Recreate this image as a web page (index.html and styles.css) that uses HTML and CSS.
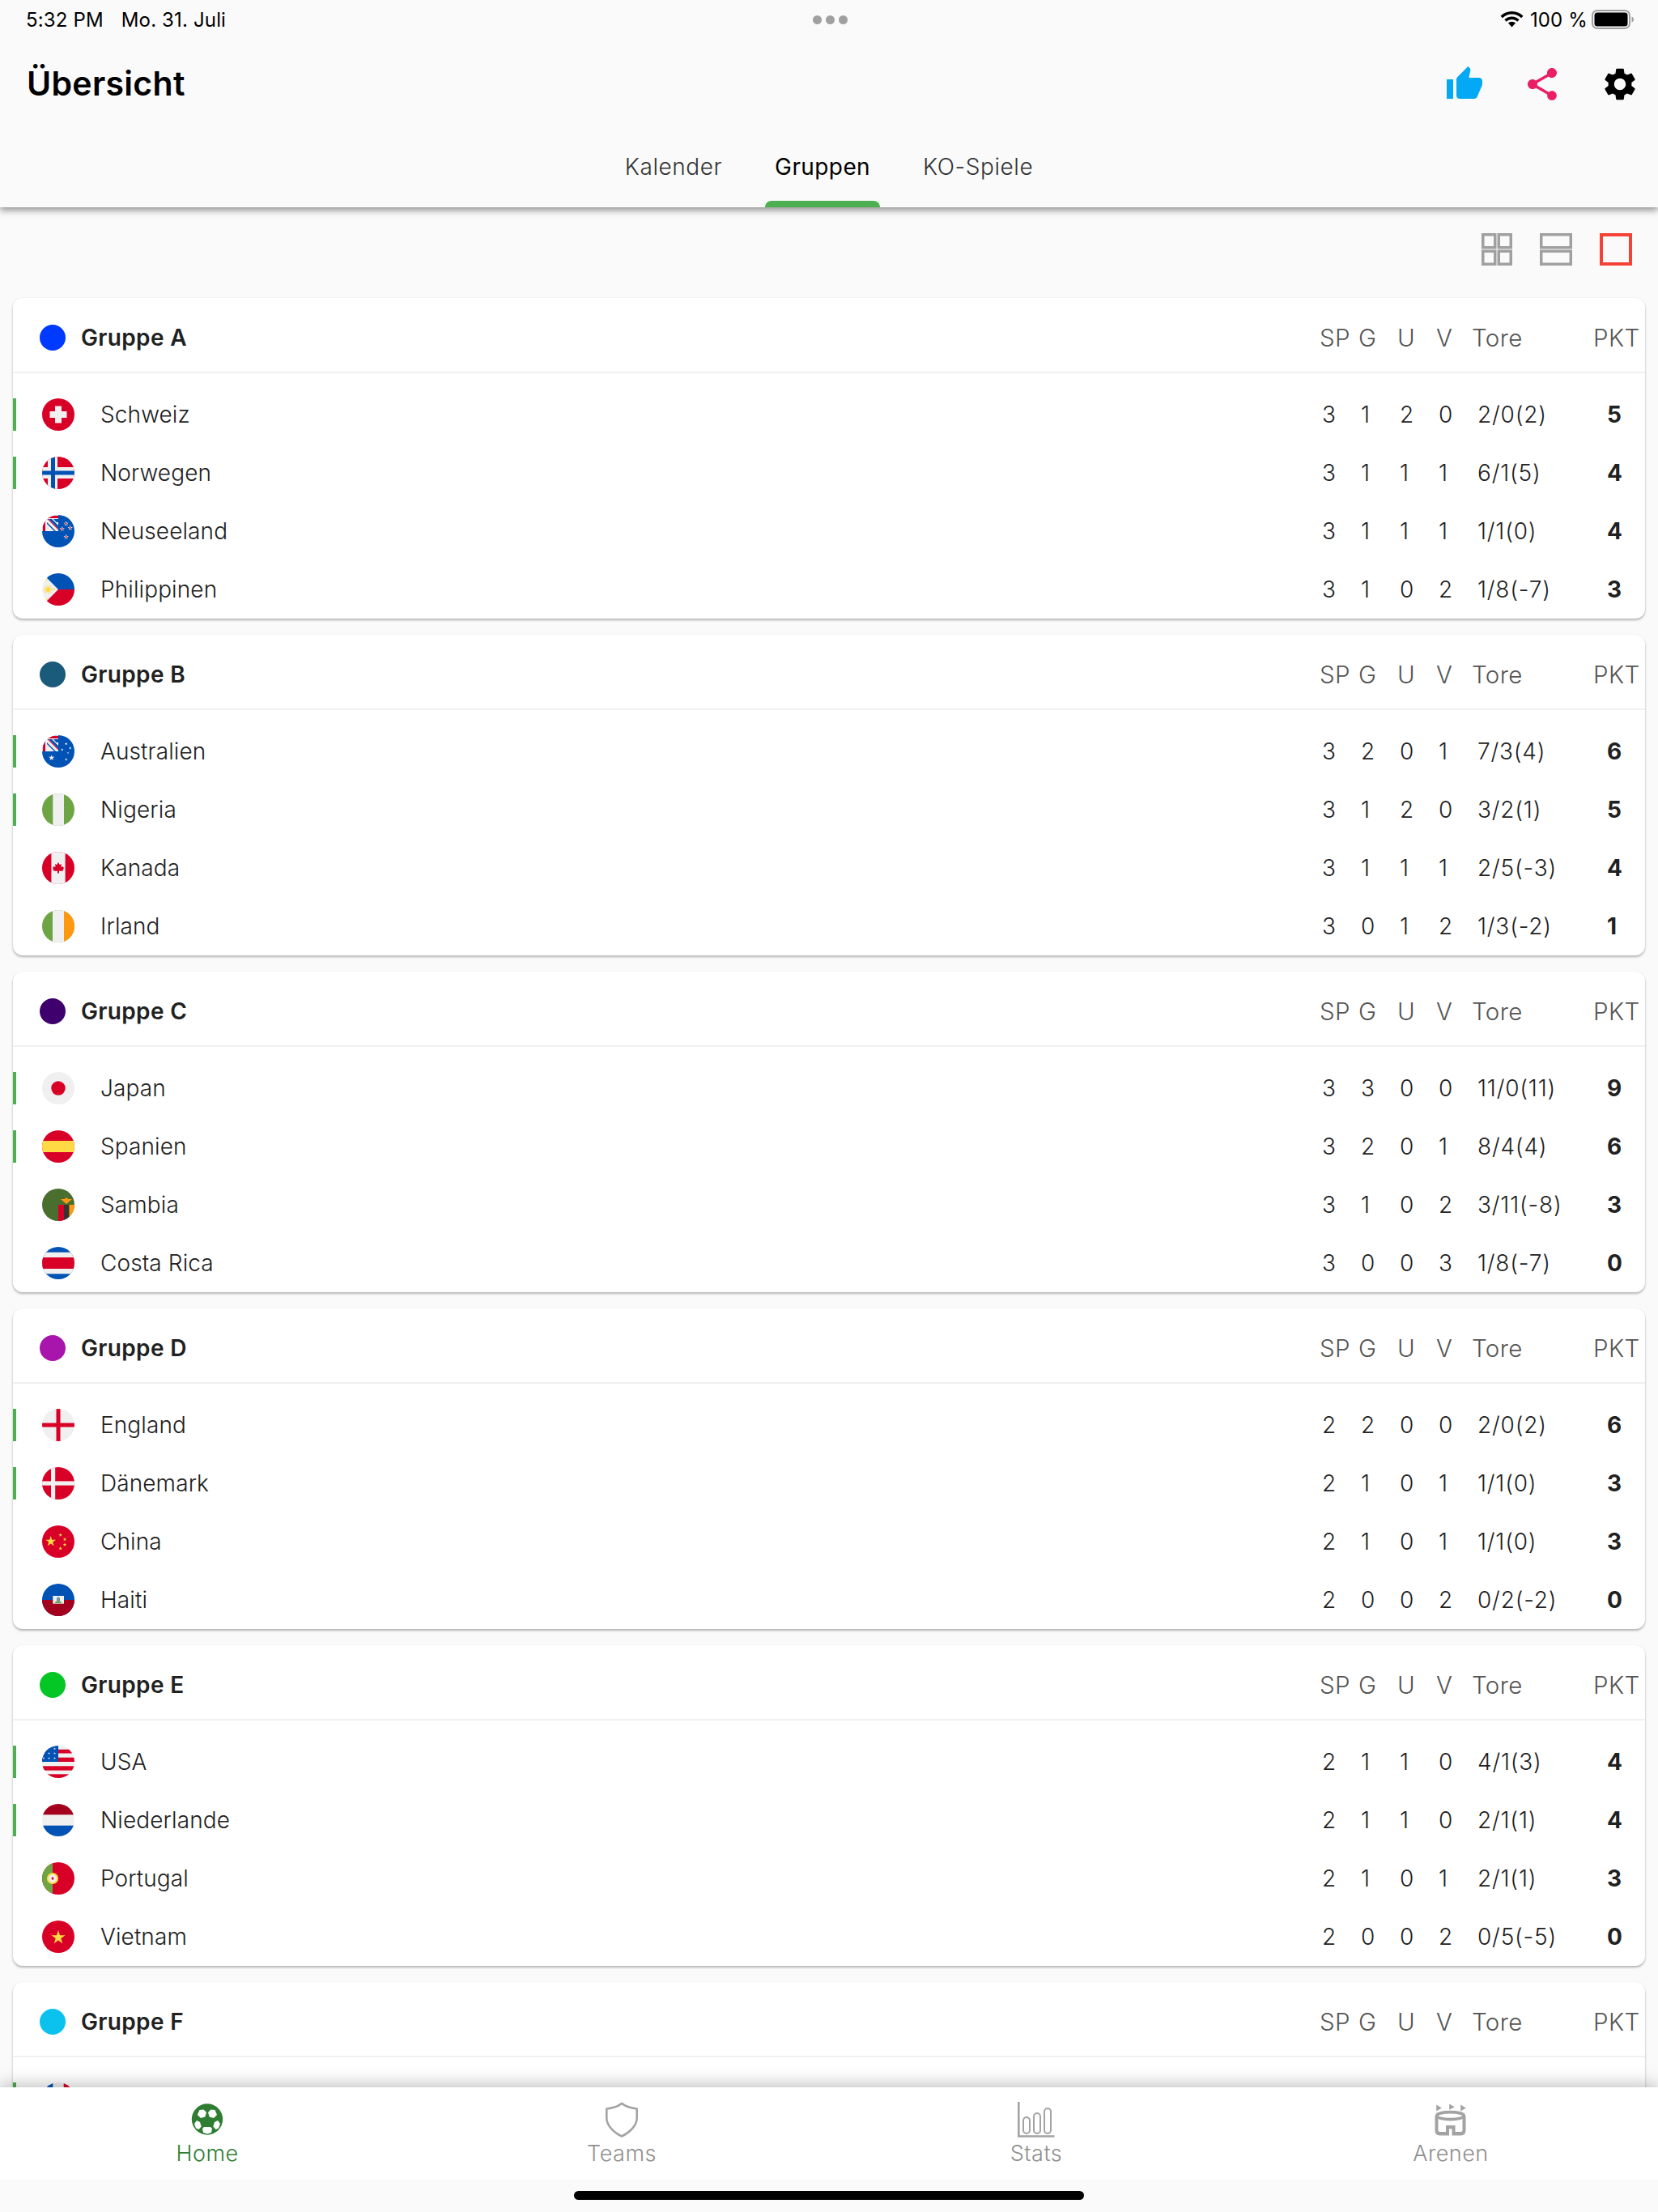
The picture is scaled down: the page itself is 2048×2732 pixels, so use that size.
FILE: index.html
```html
<!DOCTYPE html>
<html lang="de">
<head>
<meta charset="utf-8">
<title>Übersicht</title>
<link rel="stylesheet" href="styles.css">
</head>
<body>
<svg class="defs" width="0" height="0" aria-hidden="true">
  <defs>
    <polygon id="s" points="0,-1 .225,-.309 .951,-.309 .363,.118 .588,.809 0,.382 -.588,.809 -.363,.118 -.951,-.309 -.225,-.309"/>
    <g id="union">
      <rect width="20" height="20" fill="#f0f0f0"/>
      <path d="M1 7V2.500Q2 1 6 1H20V4H6.500Q4 4 4 7V20H1Z" fill="#d80027"/>
      <path d="M6 5H12L20 13V20H15L6 11Z" fill="#0052b4"/>
      <path d="M5 5H8L20 17V20H17L5 8Z" fill="#f0f0f0"/>
      <path d="M6.500 5H8L20 17V18.500Z" fill="#d80027"/>
      <path d="M14 5H20V9H17.500Z" fill="#0052b4"/>
    </g>
    <symbol id="ch" viewBox="0 0 40 40"><rect width="40" height="40" fill="#d80027"/><path d="M16 9.500H24V16H30.500V24H24V30.500H16V24H9.500V16H16Z" fill="#f0f0f0"/></symbol>
    <symbol id="no" viewBox="0 0 40 40"><rect width="40" height="40" fill="#d80027"/><path d="M7 0H19V13H40V27H19V40H7V27H0V13H7Z" fill="#f0f0f0"/><path d="M11 0H16V17.500H40V22.500H16V40H11V22.500H0V17.500H11Z" fill="#0052b4"/></symbol>
    <symbol id="nz" viewBox="0 0 40 40"><rect width="40" height="40" fill="#0052b4"/><use href="#union"/><g fill="#f0f0f0"><use href="#s" transform="translate(29.700 10.700) scale(3.400)"/><use href="#s" transform="translate(24.700 17.300) scale(3.400)"/><use href="#s" transform="translate(34.700 16) scale(3.400)"/><use href="#s" transform="translate(29.700 27) scale(3.400)"/></g><g fill="#d80027"><use href="#s" transform="translate(29.700 10.700) scale(1.800)"/><use href="#s" transform="translate(24.700 17.300) scale(1.800)"/><use href="#s" transform="translate(34.700 16) scale(1.800)"/><use href="#s" transform="translate(29.700 27) scale(1.800)"/></g></symbol>
    <symbol id="ph" viewBox="0 0 40 40"><rect width="40" height="40" fill="#f0f0f0"/><path d="M5.860 5.860 20 20H40V0H5.860Z" fill="#0052b4"/><path d="M5.860 34.140 20 20H40V40H5.860Z" fill="#d80027"/><circle cx="7.300" cy="20" r="3.100" fill="#ffda44"/><circle cx="7.300" cy="20" r="4.400" fill="none" stroke="#ffda44" stroke-width="1.600" stroke-dasharray="1.300 1.500"/><circle cx="6" cy="8" r=".9" fill="#ffda44"/><circle cx="6" cy="32" r=".9" fill="#ffda44"/><circle cx="15" cy="20" r=".9" fill="#ffda44"/></symbol>
    <symbol id="au" viewBox="0 0 40 40"><rect width="40" height="40" fill="#0052b4"/><use href="#union"/><g fill="#f0f0f0"><use href="#s" transform="translate(11.700 28) scale(3.800)"/><use href="#s" transform="translate(29.700 10.700) scale(1.900)"/><use href="#s" transform="translate(24.700 18) scale(1.900)"/><use href="#s" transform="translate(34.700 16) scale(1.900)"/><use href="#s" transform="translate(32 22) scale(1.300)"/><use href="#s" transform="translate(29.700 30) scale(1.900)"/></g></symbol>
    <symbol id="ng" viewBox="0 0 40 40"><rect width="40" height="40" fill="#6da544"/><rect x="13.300" width="13.700" height="40" fill="#f0f0f0"/></symbol>
    <symbol id="ca" viewBox="0 0 40 40"><rect width="40" height="40" fill="#d80027"/><rect x="11.400" width="17.200" height="40" fill="#f0f0f0"/><path d="M20 13 21.800 16 24 15.200 23.400 19 25.500 18 27 20.200 25.800 22 26.500 23 23 24 21 23.500V26.500H19V23.500L17 24 13.500 23 14.200 22 13 20.200 14.500 18 16.600 19 16 15.200 18.200 16Z" fill="#d80027"/></symbol>
    <symbol id="ie" viewBox="0 0 40 40"><rect width="40" height="40" fill="#6da544"/><rect x="13" width="14" height="40" fill="#f0f0f0"/><rect x="27" width="13" height="40" fill="#ff9811"/></symbol>
    <symbol id="jp" viewBox="0 0 40 40"><rect width="40" height="40" fill="#f0f0f0"/><circle cx="20" cy="20" r="8.700" fill="#d80027"/></symbol>
    <symbol id="es" viewBox="0 0 40 40"><rect width="40" height="40" fill="#d80027"/><rect y="13" width="40" height="14" fill="#ffda44"/></symbol>
    <symbol id="zm" viewBox="0 0 40 40"><rect width="40" height="40" fill="#496e2d"/><rect x="20" y="20" width="7" height="20" fill="#d80027"/><rect x="27" y="20" width="6.500" height="20" fill="#333"/><rect x="33.500" y="20" width="6.500" height="20" fill="#ff9811"/><path d="M23 13H27.500L30 11 32.500 13H37L33.500 16 30 19 26.500 16Z" fill="#ff9811"/></symbol>
    <symbol id="cr" viewBox="0 0 40 40"><rect width="40" height="40" fill="#0052b4"/><rect y="6.700" width="40" height="26.600" fill="#f0f0f0"/><rect y="13" width="40" height="14" fill="#d80027"/></symbol>
    <symbol id="en" viewBox="0 0 40 40"><rect width="40" height="40" fill="#f0f0f0"/><rect x="17.500" width="5" height="40" fill="#d80027"/><rect y="17.500" width="40" height="5" fill="#d80027"/></symbol>
    <symbol id="dk" viewBox="0 0 40 40"><rect width="40" height="40" fill="#d80027"/><rect x="11" width="5.200" height="40" fill="#f0f0f0"/><rect y="17.400" width="40" height="5.200" fill="#f0f0f0"/></symbol>
    <symbol id="cn" viewBox="0 0 40 40"><rect width="40" height="40" fill="#d80027"/><g fill="#ffda44"><use href="#s" transform="translate(10.700 19.800) scale(6.800)"/><use href="#s" transform="translate(22.700 11.700) scale(2.500)"/><use href="#s" transform="translate(28 17.300) scale(2.500)"/><use href="#s" transform="translate(28 23.700) scale(2.500)"/><use href="#s" transform="translate(22.700 28.500) scale(2.500)"/></g></symbol>
    <symbol id="ht" viewBox="0 0 40 40"><rect width="40" height="40" fill="#0052b4"/><rect y="20" width="40" height="20" fill="#a2001d"/><rect x="13.300" y="15" width="13.700" height="9.700" fill="#f0f0f0"/><rect x="18.300" y="16.500" width="3.400" height="5.500" rx="1.500" fill="#0052b4"/><path d="M15.500 24 17 21.800H23L24.500 24Z" fill="#6da544"/><rect x="19.400" y="17" width="1.200" height="4.500" fill="#ffda44"/></symbol>
    <symbol id="us" viewBox="0 0 40 40"><rect width="40" height="40" fill="#f0f0f0"/><g fill="#d80027"><rect y="4.500" width="40" height="5"/><rect y="14.700" width="40" height="5.300"/><rect y="25.300" width="40" height="5.300"/><rect y="35.300" width="40" height="4.700"/></g><rect x="0" width="20" height="20" fill="#0052b4"/><rect x="20" width="20" height="4.500" fill="#f0f0f0"/><g fill="#f0f0f0"><use href="#s" transform="translate(15.500 4) scale(1.600)"/><use href="#s" transform="translate(8.500 9.500) scale(1.600)"/><use href="#s" transform="translate(15.500 9.500) scale(1.600)"/><use href="#s" transform="translate(2 15.500) scale(1.600)"/><use href="#s" transform="translate(8.500 15.500) scale(1.600)"/><use href="#s" transform="translate(15.500 15.500) scale(1.600)"/></g></symbol>
    <symbol id="nl" viewBox="0 0 40 40"><rect width="40" height="40" fill="#f0f0f0"/><rect width="40" height="13.300" fill="#a2001d"/><rect y="26.700" width="40" height="13.300" fill="#0052b4"/></symbol>
    <symbol id="pt" viewBox="0 0 40 40"><rect width="40" height="40" fill="#d80027"/><rect width="13" height="40" fill="#6da544"/><circle cx="13" cy="20" r="6" fill="#f0f0f0" stroke="#ffda44" stroke-width="2.200"/><rect x="10" y="16.500" width="6" height="7" rx="1.500" fill="#f0f0f0"/><rect x="11.800" y="18.500" width="2.400" height="3" fill="#d80027"/></symbol>
    <symbol id="vn" viewBox="0 0 40 40"><rect width="40" height="40" fill="#d80027"/><use href="#s" fill="#ffda44" transform="translate(20 21) scale(9)"/></symbol>
    <symbol id="fr" viewBox="0 0 40 40"><rect width="40" height="40" fill="#f0f0f0"/><rect width="13.300" height="40" fill="#0052b4"/><rect x="26.700" width="13.300" height="40" fill="#d80027"/></symbol>
  </defs>
</svg>

<header class="app-header">
  <div class="status">
    <div class="status-left"><span>5:32 PM</span><span>Mo. 31. Juli</span></div>
    <div class="dots"><i></i><i></i><i></i></div>
    <div class="status-right">
      <svg class="wifi" viewBox="0 0 29 20"><path d="M14.500 0C9 0 4.200 2.200.5 5.700L3 8.300C6 5.400 10 3.600 14.500 3.600S23 5.400 26 8.300L28.500 5.700C24.800 2.200 20 0 14.500 0Z"/><path d="M14.500 6.500C11 6.500 7.700 7.900 5.300 10.200L7.800 12.800C9.600 11.100 11.900 10.100 14.500 10.100S19.400 11.100 21.200 12.800L23.700 10.200C21.300 7.900 18 6.500 14.500 6.500Z"/><path d="M14.500 12.800C12.800 12.800 11.200 13.500 10 14.600L14.500 19.500 19 14.600C17.800 13.500 16.200 12.800 14.500 12.800Z"/></svg>
      <span class="pct">100 %</span>
      <svg class="battery" viewBox="0 0 52 24"><rect x="1" y="1" width="46" height="22" rx="6" fill="none" stroke="#a0a0a0" stroke-width="2"/><rect x="3.500" y="3.500" width="41" height="17" rx="3.500"/><path d="M49.500 8.500C51 9 52 10.300 52 12S51 15 49.500 15.500Z" fill="#a0a0a0"/></svg>
    </div>
  </div>
  <div class="title-row">
    <h1 class="title">Übersicht</h1>
    <div class="actions">
      <svg class="action thumb" viewBox="0 0 24 24"><path d="M1 21h4V9H1v12zm22-11c0-1.100-.9-2-2-2h-6.310l.95-4.570.03-.32c0-.41-.17-.79-.44-1.060L14.170 1 7.590 7.590C7.220 7.950 7 8.450 7 9v10c0 1.100.9 2 2 2h9c.83 0 1.540-.5 1.840-1.220l3.020-7.050c.09-.23.14-.47.14-.73v-2z"/></svg>
      <svg class="action share" viewBox="0 0 24 24"><path d="M18 16.080c-.76 0-1.440.3-1.960.77L8.910 12.700c.05-.23.09-.46.09-.7s-.04-.47-.09-.7l7.050-4.110c.54.5 1.250.81 2.040.81 1.660 0 3-1.340 3-3s-1.340-3-3-3-3 1.340-3 3c0 .24.04.47.09.7L8.040 9.810C7.500 9.310 6.790 9 6 9c-1.660 0-3 1.340-3 3s1.340 3 3 3c.79 0 1.500-.31 2.040-.81l7.120 4.160c-.05.21-.08.43-.08.65 0 1.610 1.310 2.920 2.920 2.920 1.610 0 2.920-1.310 2.920-2.920s-1.310-2.920-2.920-2.920z"/></svg>
      <svg class="action gear" viewBox="0 0 24 24"><path d="M19.140 12.940c.04-.3.06-.61.06-.94 0-.32-.02-.64-.07-.94l2.030-1.580c.18-.14.23-.41.12-.61l-1.920-3.320c-.12-.22-.37-.29-.59-.22l-2.390.96c-.5-.38-1.030-.7-1.620-.94L14.400 2.810c-.04-.24-.24-.41-.48-.41h-3.840c-.24 0-.43.17-.47.41L9.250 5.350C8.660 5.590 8.120 5.920 7.630 6.290L5.240 5.330c-.22-.08-.47 0-.59.22L2.740 8.870C2.620 9.080 2.660 9.340 2.860 9.480l2.030 1.580C4.840 11.360 4.800 11.690 4.800 12s.02.64.07.94l-2.030 1.580c-.18.14-.23.41-.12.61l1.920 3.320c.12.22.37.29.59.22l2.390-.96c.5.38 1.030.7 1.620.94l.36 2.540c.05.24.24.41.48.41h3.840c.24 0 .44-.17.47-.41l.36-2.540c.59-.24 1.130-.56 1.620-.94l2.390.96c.22.08.47 0 .59-.22l1.920-3.320c.12-.22.07-.47-.12-.61L19.140 12.940zM12 15.600c-1.980 0-3.600-1.620-3.600-3.600s1.620-3.600 3.600-3.600 3.600 1.620 3.600 3.600-1.620 3.600-3.600 3.600z"/></svg>
    </div>
  </div>
  <nav class="tabs">
    <div class="tab">Kalender</div>
    <div class="tab active">Gruppen</div>
    <div class="tab">KO-Spiele</div>
  </nav>
</header>

<main class="content">
  <div class="views">
    <svg class="view-grid" viewBox="0 0 38 40"><g fill="none" stroke="#a0a0a0" stroke-width="3.500"><rect x="1.750" y="1.750" width="15" height="16"/><rect x="21.250" y="1.750" width="15" height="16"/><rect x="1.750" y="22.250" width="15" height="16"/><rect x="21.250" y="22.250" width="15" height="16"/></g></svg>
    <svg class="view-one" viewBox="0 0 40 40"><g fill="none" stroke="#a0a0a0" stroke-width="3.500"><rect x="1.750" y="1.750" width="36.500" height="16"/><rect x="1.750" y="22.250" width="36.500" height="16"/></g></svg>
    <svg class="view-one" viewBox="0 0 40 40"><rect x="2" y="2" width="36" height="36" fill="none" stroke="#f44336" stroke-width="4"/></svg>
  </div>

  <section class="card">
    <div class="card-head"><span class="dot dot-a"></span><span class="group">Gruppe A</span>
      <div class="stats head"><span>SP</span><span>G</span><span>U</span><span>V</span><span>Tore</span><span>PKT</span></div></div>
    <div class="rows">
      <div class="row"><i class="bar on"></i><svg class="flag"><use href="#ch"/></svg><span class="name">Schweiz</span><div class="stats"><span>3</span><span>1</span><span>2</span><span>0</span><span>2/0(2)</span><b>5</b></div></div>
      <div class="row"><i class="bar on"></i><svg class="flag"><use href="#no"/></svg><span class="name">Norwegen</span><div class="stats"><span>3</span><span>1</span><span>1</span><span>1</span><span>6/1(5)</span><b>4</b></div></div>
      <div class="row"><i class="bar"></i><svg class="flag"><use href="#nz"/></svg><span class="name">Neuseeland</span><div class="stats"><span>3</span><span>1</span><span>1</span><span>1</span><span>1/1(0)</span><b>4</b></div></div>
      <div class="row"><i class="bar"></i><svg class="flag"><use href="#ph"/></svg><span class="name">Philippinen</span><div class="stats"><span>3</span><span>1</span><span>0</span><span>2</span><span>1/8(-7)</span><b>3</b></div></div>
    </div>
  </section>

  <section class="card">
    <div class="card-head"><span class="dot dot-b"></span><span class="group">Gruppe B</span>
      <div class="stats head"><span>SP</span><span>G</span><span>U</span><span>V</span><span>Tore</span><span>PKT</span></div></div>
    <div class="rows">
      <div class="row"><i class="bar on"></i><svg class="flag"><use href="#au"/></svg><span class="name">Australien</span><div class="stats"><span>3</span><span>2</span><span>0</span><span>1</span><span>7/3(4)</span><b>6</b></div></div>
      <div class="row"><i class="bar on"></i><svg class="flag"><use href="#ng"/></svg><span class="name">Nigeria</span><div class="stats"><span>3</span><span>1</span><span>2</span><span>0</span><span>3/2(1)</span><b>5</b></div></div>
      <div class="row"><i class="bar"></i><svg class="flag"><use href="#ca"/></svg><span class="name">Kanada</span><div class="stats"><span>3</span><span>1</span><span>1</span><span>1</span><span>2/5(-3)</span><b>4</b></div></div>
      <div class="row"><i class="bar"></i><svg class="flag"><use href="#ie"/></svg><span class="name">Irland</span><div class="stats"><span>3</span><span>0</span><span>1</span><span>2</span><span>1/3(-2)</span><b>1</b></div></div>
    </div>
  </section>

  <section class="card">
    <div class="card-head"><span class="dot dot-c"></span><span class="group">Gruppe C</span>
      <div class="stats head"><span>SP</span><span>G</span><span>U</span><span>V</span><span>Tore</span><span>PKT</span></div></div>
    <div class="rows">
      <div class="row"><i class="bar on"></i><svg class="flag"><use href="#jp"/></svg><span class="name">Japan</span><div class="stats"><span>3</span><span>3</span><span>0</span><span>0</span><span>11/0(11)</span><b>9</b></div></div>
      <div class="row"><i class="bar on"></i><svg class="flag"><use href="#es"/></svg><span class="name">Spanien</span><div class="stats"><span>3</span><span>2</span><span>0</span><span>1</span><span>8/4(4)</span><b>6</b></div></div>
      <div class="row"><i class="bar"></i><svg class="flag"><use href="#zm"/></svg><span class="name">Sambia</span><div class="stats"><span>3</span><span>1</span><span>0</span><span>2</span><span>3/11(-8)</span><b>3</b></div></div>
      <div class="row"><i class="bar"></i><svg class="flag"><use href="#cr"/></svg><span class="name">Costa Rica</span><div class="stats"><span>3</span><span>0</span><span>0</span><span>3</span><span>1/8(-7)</span><b>0</b></div></div>
    </div>
  </section>

  <section class="card">
    <div class="card-head"><span class="dot dot-d"></span><span class="group">Gruppe D</span>
      <div class="stats head"><span>SP</span><span>G</span><span>U</span><span>V</span><span>Tore</span><span>PKT</span></div></div>
    <div class="rows">
      <div class="row"><i class="bar on"></i><svg class="flag"><use href="#en"/></svg><span class="name">England</span><div class="stats"><span>2</span><span>2</span><span>0</span><span>0</span><span>2/0(2)</span><b>6</b></div></div>
      <div class="row"><i class="bar on"></i><svg class="flag"><use href="#dk"/></svg><span class="name">Dänemark</span><div class="stats"><span>2</span><span>1</span><span>0</span><span>1</span><span>1/1(0)</span><b>3</b></div></div>
      <div class="row"><i class="bar"></i><svg class="flag"><use href="#cn"/></svg><span class="name">China</span><div class="stats"><span>2</span><span>1</span><span>0</span><span>1</span><span>1/1(0)</span><b>3</b></div></div>
      <div class="row"><i class="bar"></i><svg class="flag"><use href="#ht"/></svg><span class="name">Haiti</span><div class="stats"><span>2</span><span>0</span><span>0</span><span>2</span><span>0/2(-2)</span><b>0</b></div></div>
    </div>
  </section>

  <section class="card">
    <div class="card-head"><span class="dot dot-e"></span><span class="group">Gruppe E</span>
      <div class="stats head"><span>SP</span><span>G</span><span>U</span><span>V</span><span>Tore</span><span>PKT</span></div></div>
    <div class="rows">
      <div class="row"><i class="bar on"></i><svg class="flag"><use href="#us"/></svg><span class="name">USA</span><div class="stats"><span>2</span><span>1</span><span>1</span><span>0</span><span>4/1(3)</span><b>4</b></div></div>
      <div class="row"><i class="bar on"></i><svg class="flag"><use href="#nl"/></svg><span class="name">Niederlande</span><div class="stats"><span>2</span><span>1</span><span>1</span><span>0</span><span>2/1(1)</span><b>4</b></div></div>
      <div class="row"><i class="bar"></i><svg class="flag"><use href="#pt"/></svg><span class="name">Portugal</span><div class="stats"><span>2</span><span>1</span><span>0</span><span>1</span><span>2/1(1)</span><b>3</b></div></div>
      <div class="row"><i class="bar"></i><svg class="flag"><use href="#vn"/></svg><span class="name">Vietnam</span><div class="stats"><span>2</span><span>0</span><span>0</span><span>2</span><span>0/5(-5)</span><b>0</b></div></div>
    </div>
  </section>

  <section class="card">
    <div class="card-head"><span class="dot dot-f"></span><span class="group">Gruppe F</span>
      <div class="stats head"><span>SP</span><span>G</span><span>U</span><span>V</span><span>Tore</span><span>PKT</span></div></div>
    <div class="rows">
      <div class="row"><i class="bar on"></i><svg class="flag"><use href="#fr"/></svg></div>
    </div>
  </section>
</main>

<nav class="bottom-nav">
  <div class="nav-item current">
    <svg class="nav-icon" viewBox="0 0 46 44"><g transform="translate(4 2)"><circle cx="19" cy="19.500" r="19.200" fill="#2e7d32"/><g fill="#fff"><path d="M9.500 8 14.500 7.500 18 11 16.300 16.500 11 18 6.800 14Z"/><path d="M23.500 7.500 28.500 8 31 14 27 18 21.700 16.500 20 11Z"/><path d="M6 21 10 23 11.700 28.500 8.500 32 5 30.500 3 25Z"/><path d="M32 21 35 25 33 30.500 29.500 32 26.300 28.500 28 23Z"/><path d="M15 29H23L25 31 24 36 19 37.500 14 36 13 31Z"/></g></g></svg>
    <span>Home</span>
  </div>
  <div class="nav-item">
    <svg class="nav-icon" viewBox="0 0 46 44"><path d="M23 1.800C27 5.500 35 7.800 41.700 8.500V20C41.700 29 33 38 23 42.500 13 38 4.300 29 4.300 20V8.500C11 7.800 19 5.500 23 1.800Z" fill="none" stroke="#a3a3a3" stroke-width="2.600" stroke-linejoin="round"/></svg>
    <span>Teams</span>
  </div>
  <div class="nav-item">
    <svg class="nav-icon" viewBox="0 0 46 44"><g fill="none" stroke="#a3a3a3"><path d="M1.300 0V42.500H45.500" stroke-width="2.600"/><rect x="7" y="19" width="8" height="20" rx="4" stroke-width="2"/><rect x="20" y="14" width="8" height="25" rx="4" stroke-width="2"/><rect x="33" y="8" width="8" height="31" rx="4" stroke-width="2"/></g></svg>
    <span>Stats</span>
  </div>
  <div class="nav-item">
    <svg class="nav-icon" viewBox="0 0 46 44"><g transform="translate(3.500 2.500) scale(1 1.080)"><g fill="#a3a3a3"><path d="M1.700 1 8.300 4.600 1.700 8.300Z"/><path d="M17.700 0 24.300 3.400 17.700 6.700Z"/><path d="M31.700 1 38.300 4.600 31.700 8.300Z"/></g><g fill="none" stroke="#a3a3a3"><ellipse cx="19" cy="13.500" rx="17" ry="4.200" stroke-width="3.400"/><path d="M2 14V30Q2 34 6 34H15.500V26.500H23V34H32Q36 34 36 30V14" stroke-width="4"/></g></g></svg>
    <span>Arenen</span>
  </div>
</nav>
<div class="home-area"><div class="home-bar"></div></div>
</body>
</html>
```

FILE: styles.css
```css
* { box-sizing: border-box; }
html, body { margin: 0; padding: 0; }
body {
  width: 2048px;
  height: 2732px;
  overflow: hidden;
  display: flex;
  flex-direction: column;
  background: #fafafa;
  color: #212121;
  font-family: Inter, "Noto Sans", sans-serif;
}
.defs { position: absolute; }

.app-header {
  position: relative;
  z-index: 2;
  height: 256px;
  flex: none;
  background: #fafafa;
  box-shadow: 0 4px 8px rgba(0, 0, 0, .4);
}
.status {
  height: 48px;
  padding: 0 30px 0 32px;
  display: grid;
  grid-template-columns: 1fr auto 1fr;
  align-items: center;
  font-size: 24px;
  letter-spacing: .15px;
  color: #000;
}
.status-left { display: flex; gap: 22px; }
.dots { display: flex; gap: 5px; }
.dots i { width: 11px; height: 11px; border-radius: 50%; background: #a0a0a0; }
.status-right { display: flex; align-items: center; justify-content: flex-end; }
.wifi { width: 29px; height: 20px; fill: #000; margin-right: 8px; }
.pct { margin-right: 5px; }
.battery { width: 52px; height: 24px; fill: #000; }

.title-row {
  height: 110px;
  padding: 0 23px 0 33px;
  display: flex;
  align-items: center;
  justify-content: space-between;
}
.title { margin: 0; font-size: 41px; font-weight: 600; letter-spacing: .3px; color: #000; }
.actions { display: flex; gap: 48px; margin-top: 2px; }
.action { width: 48px; height: 48px; }
.thumb { fill: #03a9f4; }
.share { fill: #e91e63; }
.gear { fill: #000; }

.tabs { height: 98px; display: flex; justify-content: center; gap: 41px; }
.tab {
  padding: 5px 12px 0;
  display: flex;
  align-items: center;
  font-size: 28px;
  font-weight: 300;
  letter-spacing: .55px;
  color: #333;
  border-bottom: 8px solid transparent;
}
.tab.active { color: #000; font-weight: 400; letter-spacing: .4px; position: relative; }
.tab.active::after {
  content: "";
  position: absolute;
  left: 0;
  right: 0;
  bottom: -8px;
  height: 8px;
  background: #4caf50;
  border-radius: 8px 8px 0 0;
}

.content { flex: 1; min-height: 0; overflow: hidden; }
.views {
  height: 112px;
  padding: 32px 32px 0 0;
  display: flex;
  justify-content: flex-end;
  align-items: flex-start;
  gap: 34px;
}
.view-grid { width: 38px; height: 40px; }
.view-one { width: 40px; height: 40px; }

.card {
  margin: 0 16px 20px;
  background: #fff;
  border-radius: 12px;
  box-shadow: 0 2px 3px rgba(0, 0, 0, .28), 0 0 2px rgba(0, 0, 0, .06);
}
.card-head {
  height: 93px;
  padding-top: 7px;
  display: flex;
  align-items: center;
  border-bottom: 2px solid #f0f0f0;
}
.dot { width: 32px; height: 32px; border-radius: 50%; margin-left: 33px; flex: none; }
.dot-a { background: #0039ff; }
.dot-b { background: #1a5a7a; }
.dot-c { background: #3f006e; }
.dot-d { background: #a815ac; }
.dot-e { background: #04c625; }
.dot-f { background: #0bc2ee; }
.group { margin-left: 19px; font-size: 28px; font-weight: 600; letter-spacing: .35px; }

.rows { padding-top: 15px; }
.row { height: 72px; display: flex; align-items: center; }
.bar { width: 4px; height: 40px; flex: none; }
.bar.on { background: #4caf50; }
.flag { width: 40px; height: 40px; border-radius: 50%; margin-left: 32px; flex: none; }
.name { margin-left: 32px; font-size: 28px; font-weight: 300; letter-spacing: .1px; }

.stats {
  margin-left: auto;
  display: grid;
  grid-template-columns: 48px 48px 48px 44px 150px 63px;
  font-size: 28px;
  font-weight: 300;
  letter-spacing: .8px;
}
.stats span { padding-left: 2px; white-space: nowrap; }
.stats span:nth-child(5) { padding-left: 6px; }
.stats b { padding-left: 16px; font-weight: 700; }
.stats.head { color: #555; font-size: 29.500px; letter-spacing: .4px; margin-top: -1px; padding-right: 1px; }
.stats.head span { padding-left: 0; }

.bottom-nav {
  position: relative;
  z-index: 2;
  height: 114px;
  flex: none;
  display: grid;
  grid-template-columns: repeat(4, 1fr);
  background: #fff;
  box-shadow: 0 -3px 20px rgba(0, 0, 0, .26);
}
.nav-item {
  display: flex;
  flex-direction: column;
  align-items: center;
  padding-top: 18px;
  font-size: 27px;
  font-weight: 300;
  color: #8f8f8f;
}
.nav-item.current { color: #2e7d32; }
.nav-icon { width: 46px; height: 44px; flex: none; }
.nav-item span { margin-top: 4px; line-height: 32px; letter-spacing: .5px; }

.home-area { height: 40px; flex: none; padding-top: 14px; background: #fafafa; position: relative; z-index: 3; }
.home-bar { width: 630px; height: 11px; margin: 0 auto; background: #000; border-radius: 6px; }
```
